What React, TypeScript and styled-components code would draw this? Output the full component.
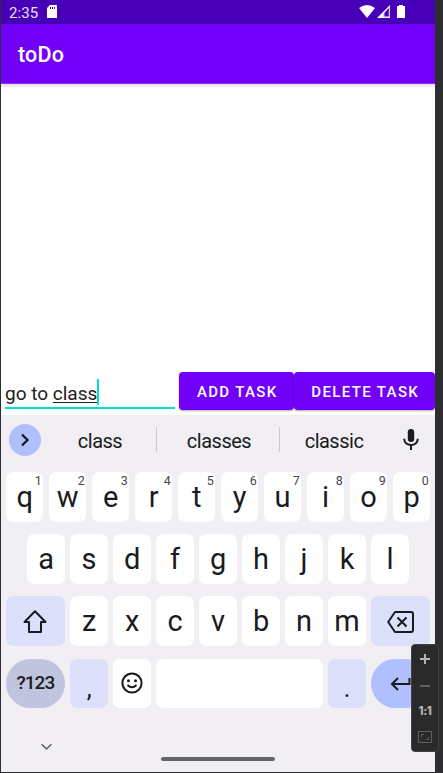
import React from 'react';
import styled, { createGlobalStyle } from 'styled-components';

const Global = createGlobalStyle`
  * { box-sizing: border-box; }
  body { margin: 0; background: #2e2e30; font-family: Roboto, sans-serif; overflow: hidden; }
  svg { display: block; flex: none; }
`;

const Desktop = styled.div`
  position: relative;
  width: 443px;
  height: 773px;
  padding: 0 8px 1px 1px;
  background: #2e2e30;
`;

const Phone = styled.div`
  width: 434px;
  height: 772px;
  display: flex;
  flex-direction: column;
  background: #fff;
  overflow: hidden;
`;

const StatusBar = styled.div`
  height: 24px;
  flex: none;
  display: flex;
  align-items: flex-start;
  padding: 5px 30px 0 8px;
  background: #4700b8;
  color: #e9e0f8;
`;

const Clock = styled.span`
  width: 38px;
  font-size: 15px;
  line-height: 17px;
  letter-spacing: 0.1px;
`;

const StatusIcons = styled.div`
  display: flex;
  margin-left: auto;
  align-items: center;
`;

const AppBar = styled.header`
  height: 60px;
  flex: none;
  display: flex;
  align-items: center;
  padding: 2px 0 0 17px;
  background: #7200f8;
  border-bottom: 1px solid #9a2cf0;
  color: #fff;
  font-size: 21.5px;
  font-weight: 500;
  letter-spacing: 0.2px;
  box-shadow: 0 1px 4px rgba(0, 0, 0, 0.22);
`;

const TaskList = styled.main`
  height: 288px;
  flex: none;
`;

const EntryRow = styled.div`
  height: 43px;
  flex: none;
  display: flex;
  padding-left: 4px;
`;

const Field = styled.div`
  width: 170px;
  height: 37px;
  margin-right: 4px;
  display: flex;
  align-items: flex-start;
  padding-top: 7px;
  border-bottom: 2px solid #03dfcc;
  color: #202020;
  font-size: 19px;
  line-height: 29px;
  white-space: pre;
`;

const Composing = styled.span`
  text-decoration: underline;
  text-decoration-thickness: 1px;
  text-underline-offset: 2px;
  text-decoration-skip-ink: none;
`;

const Cursor = styled.i`
  width: 2px;
  height: 26px;
  background: #03dfcc;
`;

const Button = styled.button<{ $w: number }>`
  width: ${(p) => p.$w}px;
  height: 38px;
  flex: none;
  padding: 1px 0 0 2px;
  border: 0;
  border-radius: 4px;
  background: #7200f8;
  color: #fff;
  font: 500 15px Roboto, sans-serif;
  letter-spacing: 1.36px;
  box-shadow: 0 1px 2px rgba(0, 0, 0, 0.35);
`;

const Keyboard = styled.section`
  flex: 1;
  display: flex;
  flex-direction: column;
  background: #f1eff3;
  color: #1a1b20;
`;

const Suggestions = styled.div`
  height: 57px;
  flex: none;
  display: flex;
  align-items: center;
  padding: 0 0 8px 8px;
`;

const Expand = styled.div`
  width: 32px;
  height: 32px;
  border-radius: 50%;
  display: grid;
  place-items: center;
  background: #b0c0ff;
`;

const Words = styled.div`
  display: grid;
  grid-template-columns: 115px 123px 108px;
  align-items: center;
  margin-left: 1px;
`;

const Word = styled.div<{ $divided?: boolean }>`
  height: 25px;
  border-right: ${(p) => (p.$divided ? '1px solid #cbc8ce' : '0')};
  text-align: center;
  font-size: 20px;
  line-height: 28px;
  letter-spacing: -0.5px;
  padding-left: ${(p) => (p.$divided ? 2 : 0)}px;
`;

const Mic = styled.div`
  margin-left: 15px;
`;

const Keys = styled.div`
  display: flex;
  flex-direction: column;
  gap: 12.4px;
  padding: 0 5px;
`;

const KeyRow = styled.div<{ $inset?: number }>`
  display: flex;
  gap: 5.6px;
  padding-left: ${(p) => p.$inset || 0}px;
`;

type Tone = 'plain' | 'soft' | 'mode' | 'enter';
const tones: Record<Tone, string> = {
  plain: '#ffffff',
  soft: '#dce0fb',
  mode: '#c0c4de',
  enter: '#b0c0ff',
};

const Key = styled.div<{ $w?: number; $tone?: Tone }>`
  position: relative;
  width: ${(p) => p.$w || 37.4}px;
  height: 49.8px;
  flex: none;
  display: flex;
  align-items: center;
  justify-content: center;
  border-radius: ${(p) => (p.$tone === 'mode' || p.$tone === 'enter' ? 25 : 7)}px;
  background: ${(p) => tones[p.$tone || 'plain']};
`;

const Letter = styled.span`
  font-size: 29px;
  line-height: 48px;
`;

const Hint = styled.span`
  position: absolute;
  top: 2px;
  right: 1.5px;
  color: #46464c;
  font-size: 12.5px;
  line-height: 14px;
`;

const ModeLabel = styled.span`
  font-size: 19px;
  font-weight: 500;
  line-height: 54px;
  letter-spacing: -1px;
`;

const Mark = styled.span`
  font-size: 25px;
  line-height: 30px;
  padding-top: 12px;
`;

const NavBar = styled.div`
  flex: 1;
  display: grid;
  grid-template-columns: 160px 114px 1fr;
  align-items: start;
`;

const HideButton = styled.div`
  padding: 35px 0 0 40px;
`;

const HomePill = styled.div`
  height: 4px;
  margin-top: 49px;
  border-radius: 2px;
  background: #646467;
`;

const ZoomPanel = styled.aside`
  position: absolute;
  left: 411px;
  top: 644px;
  width: 28px;
  height: 108px;
  display: grid;
  grid-template-rows: 28px 25px 26px 26px;
  place-items: center;
  border: 1px solid #414143;
  border-radius: 4px;
  background: #2a2a2a;
  color: #b4b4b4;
`;

const Ratio = styled.span`
  font: 800 11.5px Inter, sans-serif;
  letter-spacing: -0.4px;
`;

const ink = { fill: 'none', stroke: '#1a1b20', strokeWidth: 2 };

const letters = (s: string, hints?: string) =>
  s.split('').map((c, i) => (
    <Key key={c}>
      <Letter>{c}</Letter>
      {hints && <Hint>{hints[i]}</Hint>}
    </Key>
  ));

export default function App() {
  return (
    <>
      <Global />
      <Desktop>
        <Phone>
          <StatusBar>
            <Clock>2:35</Clock>
            <svg width="10" height="13" viewBox="0 0 10 13">
              <path fill="#fff" fillRule="evenodd" d="M3 0h6q1 0 1 1v12H0V3zM3 2v2h1V2zm2 0v2h1V2zm2 0v2h1V2z" />
            </svg>
            <StatusIcons>
              <svg width="46" height="13" viewBox="0 0 46 13">
                <path fill="#fff" d="M0 3Q8-3 16 3L8 13z" />
                <path fill="#fff" fillRule="evenodd" d="M31 0v13H18zM29.8 3l-5 5.4v3.4h5z" />
                <path fill="none" stroke="#d7c8f3" d="M25 8v4h5.5V2" />
                <path fill="#fff" d="M40 1V0h4v1h2v12h-8V1z" />
              </svg>
            </StatusIcons>
          </StatusBar>
          <AppBar>toDo</AppBar>
          <TaskList />
          <EntryRow>
            <Field>
              <span>go to </span>
              <Composing>class</Composing>
              <Cursor />
            </Field>
            <Button $w={114.5}>ADD TASK</Button>
            <Button $w={141.5}>DELETE TASK</Button>
          </EntryRow>
          <Keyboard>
            <Suggestions>
              <Expand>
                <svg width="10" height="14" viewBox="0 0 10 14" {...ink} strokeWidth={2.3}>
                  <path d="M2 1.5 7.5 7 2 12.5" />
                </svg>
              </Expand>
              <Words>
                <Word $divided>class</Word>
                <Word $divided>classes</Word>
                <Word>classic</Word>
              </Words>
              <Mic>
                <svg width="16" height="21" viewBox="0 0 16 21">
                  <rect x="4.8" y="0" width="6.4" height="13" rx="3.2" fill="#1a1b20" />
                  <path d="M1.2 9.8c0 8.2 13.6 8.2 13.6 0M8 16v5" {...ink} />
                </svg>
              </Mic>
            </Suggestions>
            <Keys>
              <KeyRow>{letters('qwertyuiop', '1234567890')}</KeyRow>
              <KeyRow $inset={21.4}>{letters('asdfghjkl')}</KeyRow>
              <KeyRow>
                <Key $w={58.8} $tone="soft">
                  <svg width="24" height="23" viewBox="0 0 24 23" {...ink}>
                    <path strokeLinejoin="round" d="M12 1.2 1.5 12H6v10h12V12h4.5z" />
                  </svg>
                </Key>
                {letters('zxcvbnm')}
                <Key $w={58.8} $tone="soft">
                  <svg width="27" height="24" viewBox="0 -2 27 24" {...ink}>
                    <path strokeLinejoin="round" d="M8 1h16q2 0 2 2v16q0 2-2 2H8L1.2 11z" />
                    <path d="m10.5 6.500 9 9m0-9-9 9" />
                  </svg>
                </Key>
              </KeyRow>
              <KeyRow>
                <Key $w={58.8} $tone="mode">
                  <ModeLabel>?123</ModeLabel>
                </Key>
                <Key $tone="soft">
                  <Mark>,</Mark>
                </Key>
                <Key>
                  <svg width="22" height="22" viewBox="0 0 22 22" {...ink}>
                    <circle cx="11" cy="11" r="9.6" />
                    <path d="M6.5 13q4.5 4.5 9 0" />
                    <circle cx="7.5" cy="8.7" r="1.5" fill="#1a1b20" stroke="none" />
                    <circle cx="14.5" cy="8.7" r="1.5" fill="#1a1b20" stroke="none" />
                  </svg>
                </Key>
                <Key $w={166.4} />
                <Key $tone="soft">
                  <Mark>.</Mark>
                </Key>
                <Key $w={58.8} $tone="enter">
                  <svg width="22" height="16" viewBox="0 -2 22 16" {...ink}>
                    <path d="M19.5 1v6H2M8 1 2 7l6 6" />
                  </svg>
                </Key>
              </KeyRow>
            </Keys>
            <NavBar>
              <HideButton>
                <svg width="11" height="8" viewBox="0 0 11 8" fill="none" stroke="#5e5e62" strokeWidth="1.5">
                  <path d="m.7 1.2 4.800 4.800 4.800-4.800" />
                </svg>
              </HideButton>
              <HomePill />
            </NavBar>
          </Keyboard>
        </Phone>
        <ZoomPanel>
          <svg width="10" height="10" viewBox="0 0 10 10" stroke="#b4b4b4" strokeWidth="2">
            <path d="M5 0v10M0 5h10" />
          </svg>
          <svg width="10" height="2" viewBox="0 0 10 2">
            <path fill="#606060" d="M0 0h10v2H0z" />
          </svg>
          <Ratio>1:1</Ratio>
          <svg width="14" height="12" viewBox="0 0 14 12" fill="none" stroke="#606060">
            <path d="M.5.5h13v11H.5zM3.5 6V3.5H6M10.5 6v2.5H8" />
          </svg>
        </ZoomPanel>
      </Desktop>
    </>
  );
}
